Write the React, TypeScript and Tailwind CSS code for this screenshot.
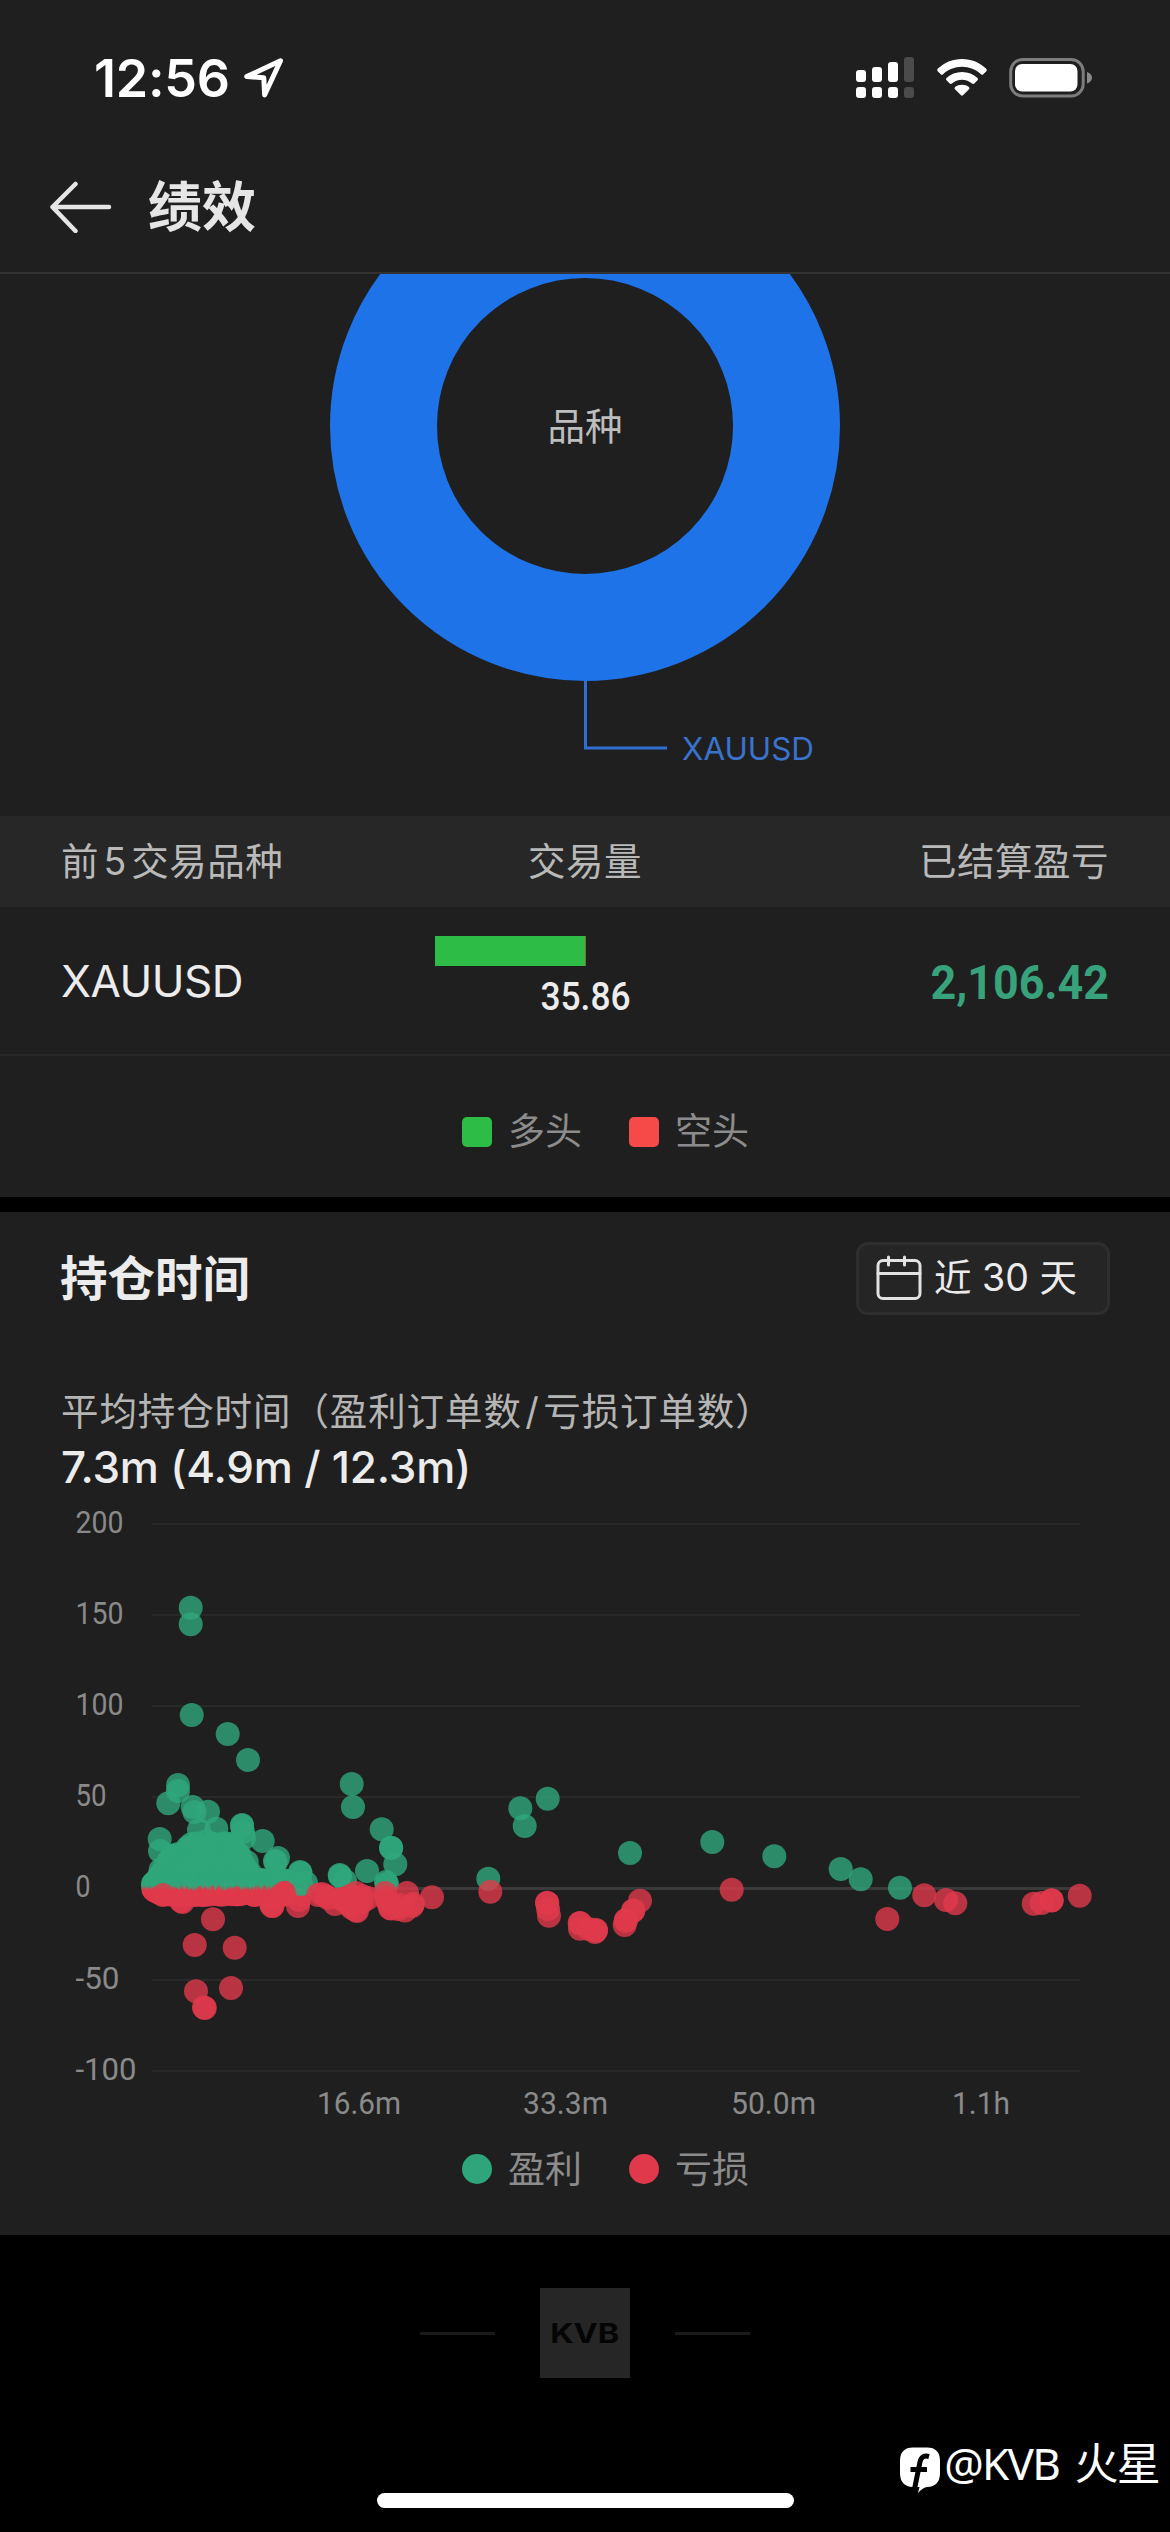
import React from "react";

type Side = "win" | "loss";
type Dot = [x: number, y: number, side: Side];

const COLORS: Record<Side, string> = { win: "#2fa77c", loss: "#e0394b" };

/* Losing trades painted beneath the profitable ones. */
const earlyLosses: [number, number][] = [
  [298, 1906], [299, 1900], [300, 1895],
];

/* Isolated trades, in plot coordinates. */
const wins: [number, number][] = [
  [190.7, 1607.7], [190.7, 1624.3], [191.7, 1715], [227.7, 1734], [248, 1760],
  [178, 1785], [178, 1791], [168.3, 1803.3], [192.7, 1807], [194.5, 1812], [208, 1811.7],
  [351.7, 1784], [353, 1807], [159.7, 1839], [160, 1851], [199, 1830], [216.3, 1828.7],
  [242, 1825], [242, 1826], [244, 1838], [243, 1832], [262.7, 1841], [275, 1861], [275.7, 1862], [278, 1858],
  [246.7, 1862], [300, 1872], [300.5, 1873], [306, 1883], [301, 1884], [339.7, 1875], [340, 1876], [345, 1881],
  [367, 1871], [381.7, 1829.3], [391, 1847.7], [391.2, 1848], [395.3, 1864.3], [386, 1882], [387, 1884],
  [520.3, 1808.3], [524.7, 1826], [547.7, 1798.7], [630, 1853], [712.3, 1842], [774.3, 1856.3],
  [488.3, 1878.7], [840.7, 1869], [860.7, 1879.3], [900, 1887.7],
];

const losses: [number, number][] = [
  [213, 1919.3], [194.7, 1945], [234.7, 1947.7], [196, 1991.3], [231, 1988], [204, 2007.5], [204.8, 2008],
  [163, 1895], [181, 1901], [182.5, 1902], [271, 1904], [272.5, 1906], [272, 1906], [284, 1893],
  [283, 1894], [318, 1895], [322, 1894], [326, 1896], [328, 1898], [335, 1904], [344, 1899], [349, 1905], [352, 1908],
  [357, 1911], [356, 1910], [357, 1902], [362, 1902], [368, 1898], [350, 1896], [356, 1893], [362, 1896], [341, 1899], [385, 1893], [386, 1898],
  [388, 1902], [390, 1908], [391, 1908.5], [405, 1910.5], [398, 1909], [412, 1906], [413, 1904], [400, 1905], [407, 1893], [432, 1897.3],
  [490.3, 1891.7], [547, 1902.7], [547.3, 1903], [548, 1909], [549, 1915.7], [579.7, 1923.3], [580, 1923], [580, 1928.7],
  [589, 1929], [596, 1930], [596, 1930.5], [595, 1932], [624.7, 1925], [625.7, 1920.7], [626, 1920], [633, 1911], [633.3, 1910.5],
  [640, 1900.7], [731.7, 1889.7], [924.3, 1895.3], [946, 1900], [955.3, 1903.3], [887.3, 1919],
  [1033.7, 1903.7], [1041.7, 1903], [1051.7, 1900.3], [1051.5, 1900.5], [1079.7, 1895.7],
];

/* Highest profitable trade by x inside the dense short-holding cluster. */
const ceiling: [number, number][] = [
  [153, 1884], [162, 1866], [174, 1854], [186, 1848], [200, 1834],
  [212, 1838], [228, 1842], [242, 1850], [246, 1868], [264, 1880], [290, 1886],
];

function ceilingAt(x: number) {
  for (let i = 1; i < ceiling.length; i++) {
    const [x1, y1] = ceiling[i];
    const [x0, y0] = ceiling[i - 1];
    if (x <= x1) return y0 + ((y1 - y0) * (x - x0)) / (x1 - x0);
  }
  return 1886;
}

function cluster(): Dot[] {
  let seed = 7;
  const rand = () => {
    seed = (seed * 16807) % 2147483647;
    return seed / 2147483647;
  };
  const out: Dot[] = [];
  for (let x = 153; x < 286; x += 0.55) {
    const top = ceilingAt(x);
    if (x < 250) out.push([x, top + rand() * (1886 - top), "win"]);
    out.push([x + 0.2, 1880 + rand() * 7, "win"]);
    out.push([x + 0.4, 1889 + rand() * Math.min(6, 1 + (x - 153) * 0.5), "loss"]);
  }
  return out;
}

const dots: Dot[] = [
  ...earlyLosses.map(([x, y]): Dot => [x, y, "loss"]),
  ...cluster(),
  ...wins.map(([x, y]): Dot => [x, y, "win"]),
  ...losses.map(([x, y]): Dot => [x, y, "loss"]),
];

const yTicks = [
  { label: "200", w: 48 },
  { label: "150", w: 48 },
  { label: "100", w: 48 },
  { label: "50", w: 31 },
  { label: "0", w: 15 },
  { label: "-50", w: 44 },
  { label: "-100", w: 61 },
];

const xTicks = [
  { label: "16.6m", x: 317, w: 84 },
  { label: "33.3m", x: 523, w: 85 },
  { label: "50.0m", x: 731, w: 85 },
  { label: "1.1h", x: 952, w: 58 },
];

function StatusBar() {
  return (
    <div className="flex h-[156px] items-center pl-[94px] pr-[78px] text-white">
      <span className="pt-[2px] text-[52px] leading-none font-semibold tracking-[-0.2px]">12:56</span>
      <svg className="ml-[12px]" width="44" height="44" viewBox="0 0 44 44" fill="none" stroke="#fff" strokeWidth="5" strokeLinejoin="round">
        <path d="M38.500 4.800 4.800 20.600 L21.800 21.800 L22.600 39 Z" />
      </svg>
      <div className="ml-auto flex items-center">
        <svg width="58" height="42" viewBox="0 0 58 42">
          <g fill="#fff">
            <rect x="0" y="13" width="10" height="12" rx="3" />
            <rect x="16" y="10" width="10" height="15" rx="3" />
            <rect x="32" y="5" width="10" height="20" rx="3" />
            <rect x="0" y="30" width="10" height="11" rx="3" />
            <rect x="16" y="30" width="10" height="11" rx="3" />
            <rect x="32" y="30" width="10" height="11" rx="3" />
          </g>
          <g fill="#4b4b4b">
            <rect x="48" y="0" width="10" height="25" rx="3" />
            <rect x="48" y="30" width="10" height="11" rx="3" />
          </g>
        </svg>
        <svg className="ml-[22px]" width="52" height="40" viewBox="0 0 52 40" fill="#fff">
          <path d="M26 1 C35.500 1 44 4.700 50.300 10.800 Q51.400 12 50.300 13.200 L47.300 16.200 Q46.200 17.200 45 16.200 C40 11.500 33.300 8.700 26 8.700 C18.700 8.700 12 11.500 7 16.200 Q5.800 17.200 4.700 16.200 L1.700 13.200 Q0.600 12 1.700 10.800 C8 4.700 16.500 1 26 1 Z" />
          <path d="M26 14 C32 14 37.400 16.300 41.500 20 Q42.600 21.200 41.500 22.300 L38.300 25.500 Q37.200 26.400 36 25.500 C33.300 23.100 29.800 21.700 26 21.700 C22.200 21.700 18.700 23.100 16 25.500 Q14.800 26.400 13.700 25.500 L10.500 22.300 Q9.400 21.200 10.500 20 C14.600 16.300 20 14 26 14 Z" />
          <path d="M26 26.700 C28.700 26.700 31 27.600 32.900 29 Q34.200 30.200 33 31.300 L27.200 37.100 Q26 38.200 24.800 37.100 L19 31.300 Q17.800 30.200 19.100 29 C21 27.600 23.300 26.700 26 26.700 Z" />
        </svg>
        <svg className="ml-[21px]" width="83" height="40" viewBox="0 0 83 40">
          <rect x="1.700" y="1.500" width="72.500" height="36.500" rx="12" fill="none" stroke="#7c7c7c" strokeWidth="3" />
          <rect x="6" y="6" width="62.500" height="27.500" rx="7" fill="#fff" />
          <path d="M78 14 Q83 16 83 19.700 Q83 23.500 78 25.500 Z" fill="#8b8b8b" />
        </svg>
      </div>
    </div>
  );
}

function LegendItem({ swatch, label }: { swatch: string; label: string }) {
  return (
    <div className="flex items-center gap-[16px]">
      <span className={swatch} />
      <span className="text-[37px] leading-none text-[#8c8c8c]">{label}</span>
    </div>
  );
}

function SymbolDonut() {
  return (
    <svg className="block" width="1170" height="542" viewBox="0 274 1170 542">
      <circle cx="585" cy="426" r="201.500" fill="none" stroke="#1e73e8" strokeWidth="107" />
      <path d="M585.500 680V748H667" fill="none" stroke="#2f6fcf" strokeWidth="3" />
      <text x="585" y="440" textAnchor="middle" fontSize="37.500" fill="#bdbdbd">品种</text>
      <text x="682" y="760" fontSize="31.500" fill="#3a72cc" textLength="132" lengthAdjust="spacingAndGlyphs">XAUUSD</text>
    </svg>
  );
}

function HoldingChart() {
  return (
    <svg className="block" width="1170" height="640" viewBox="0 1498 1170 640">
      {yTicks.map((t, i) => {
        const y = 1524 + i * 91.1;
        return (
          <g key={t.label}>
            <rect x="152" y={Math.round(y - 1)} width="928" height={t.label === "0" ? 3 : 2} fill={t.label === "0" ? "#3a3a3a" : "#292929"} />
            <text x="75.500" y={y + 9} fontFamily="Roboto" fontSize="32" fill="#8a8a8a" textLength={t.w} lengthAdjust="spacingAndGlyphs">
              {t.label}
            </text>
          </g>
        );
      })}
      {xTicks.map((t) => (
        <text key={t.label} x={t.x} y="2114" fontFamily="Roboto" fontSize="32" fill="#8a8a8a" textLength={t.w} lengthAdjust="spacingAndGlyphs">
          {t.label}
        </text>
      ))}
      {dots.map(([x, y, side], i) => (
        <circle key={i} cx={x} cy={y} r="12" fill={COLORS[side]} fillOpacity="0.8" />
      ))}
    </svg>
  );
}

export default function App() {
  return (
    <div className="flex h-[2532px] w-[1170px] flex-col overflow-hidden bg-black font-['Inter','Noto_Sans_CJK_SC',sans-serif]">
      <header className="h-[274px] shrink-0 border-b-2 border-[#333333] bg-[#1f1f1f]">
        <StatusBar />
        <div className="flex h-[102px] items-center pl-[48px]">
          <svg width="64" height="52" viewBox="0 0 64 52" fill="none" stroke="#e6e6e6" strokeWidth="4.500" strokeLinecap="round" strokeLinejoin="round">
            <path d="M27.500 3 4.500 26 27.500 50M4.500 26H61" />
          </svg>
          <h1 className="ml-[36px] pt-[2px] text-[54px] leading-none font-bold text-[#e6e6e6]">绩效</h1>
        </div>
      </header>

      <section className="h-[923px] shrink-0 bg-[#1f1f1f]">
        <SymbolDonut />
        <div className="flex h-[91px] items-center justify-between bg-[#272727] px-[61px] text-[37.5px] leading-none tracking-[0.5px] text-[#b9b9b9]">
          <span className="w-[340px]">
            前<span className="mx-[4.5px]">5</span>交易品种
          </span>
          <span>交易量</span>
          <span className="w-[340px] text-right">已结算盈亏</span>
        </div>
        <div className="flex h-[149px] justify-between border-b-2 border-[#292929] px-[61px]">
          <div className="flex w-[340px] items-center text-[44px] leading-none tracking-[-0.5px] text-[#ececec]">XAUUSD</div>
          <div className="w-[300px] pt-[29px]">
            <div className="h-[30px] w-[151px] border-r border-[#8a6a2c] bg-[#2dbd47]" />
            <div className="mt-[13px] text-center font-['Roboto'] text-[38px] leading-[36px] font-medium text-[#ececec]">
              <span className="inline-block scale-x-[0.93]">35.86</span>
            </div>
          </div>
          <div className="flex w-[340px] items-center justify-end pt-[5px] font-['Roboto'] text-[48px] leading-none font-bold text-[#37a27b]">
            <span className="inline-block origin-right scale-x-[0.935]">2,106.42</span>
          </div>
        </div>
        <div className="flex h-[141px] items-center justify-center gap-[47px] pt-[10px] pl-[41px]">
          <LegendItem swatch="size-[30px] rounded-[5px] bg-[#2dbd47]" label="多头" />
          <LegendItem swatch="size-[30px] rounded-[5px] bg-[#f54a48]" label="空头" />
        </div>
      </section>

      <section className="mt-[15px] h-[1023px] shrink-0 bg-[#1f1f1f]">
        <div className="flex h-[132px] items-center justify-between pl-[60px] pr-[60px]">
          <h2 className="pt-[2px] text-[47.5px] leading-none font-bold text-[#ececec]">持仓时间</h2>
          <button className="flex h-[73px] w-[254px] items-center rounded-[12px] border-3 border-[#2e2e2e] bg-[#252525] pl-[17px] text-[37.5px] leading-none text-[#ececec]">
            <svg width="46" height="46" viewBox="0 0 46 46" fill="none" stroke="#e2e2e2" strokeWidth="3" strokeLinecap="round">
              <rect x="2" y="5.500" width="42" height="38" rx="5" />
              <path d="M2 18.500H44M12.500 2V10M28.500 2V10" />
            </svg>
            <span className="ml-[12px] whitespace-pre">近 30 天</span>
          </button>
        </div>
        <div className="h-[154px] pt-[42px] pl-[61px]">
          <p className="text-[37.5px] leading-[52px] tracking-[0.9px] text-[#b5b5b5]">
            平均持仓时间（盈利订单数<span className="mx-[3.5px]">/</span>亏损订单数）
          </p>
          <p className="mt-[1px] text-[44px] leading-[56px] font-medium tracking-[-0.2px] text-[#ececec]">7.3m (4.9m / 12.3m)</p>
        </div>
        <HoldingChart />
        <div className="flex h-[62px] items-center justify-center gap-[47px] pl-[41px]">
          <LegendItem swatch="size-[30px] rounded-full bg-[#2ea57b]" label="盈利" />
          <LegendItem swatch="size-[30px] rounded-full bg-[#e0394b]" label="亏损" />
        </div>
      </section>

      <footer className="relative flex flex-1 flex-col items-center">
        <div className="mt-[53px] flex items-center gap-[45px]">
          <span className="h-[3px] w-[75px] bg-[#1a1a1a]" />
          <div className="flex size-[90px] items-center justify-center bg-[#262626] text-[27px] leading-none font-bold text-[#050505]">
            <span className="inline-block scale-x-[1.2]">KVB</span>
          </div>
          <span className="h-[3px] w-[75px] bg-[#1a1a1a]" />
        </div>
        <div className="absolute right-[11px] bottom-[33px] flex items-center text-white">
          <svg width="42" height="46" viewBox="0 0 42 46">
            <path d="M14 0.500H28Q41 0.500 41 14V26Q41 39.500 28 40Q24 40.500 19 46L20.500 40H14Q1 39.500 1 26V14Q1 0.500 14 0.500Z" fill="#fff" />
            <path d="M30 9.500Q22.500 7.500 21 15L15.500 42M11.500 22.500H28" fill="none" stroke="#000" strokeWidth="5" />
          </svg>
          <span className="mb-[14px] ml-[3px] font-['Noto_Sans','Noto_Sans_CJK_SC',sans-serif] text-[44px] leading-none tracking-[-1.8px] [word-spacing:6px] whitespace-pre">@KVB 火星</span>
        </div>
        <div className="absolute bottom-[24px] left-[377px] h-[15px] w-[417px] rounded-full bg-white" />
      </footer>
    </div>
  );
}
